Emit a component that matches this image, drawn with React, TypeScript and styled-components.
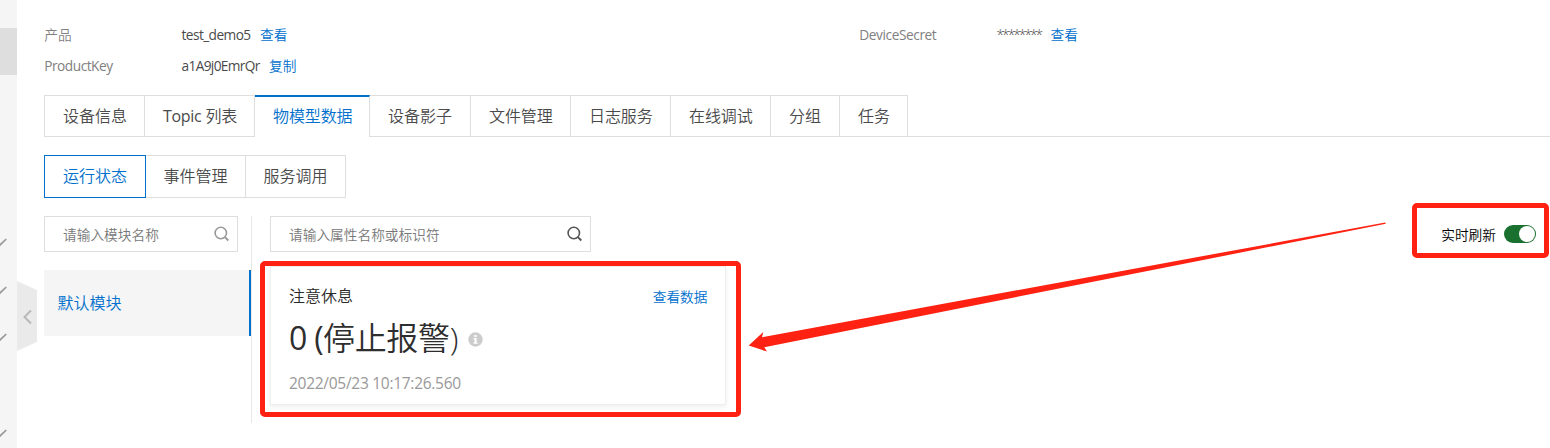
import React from 'react';
import styled, { createGlobalStyle } from 'styled-components';

const BLUE = '#0070cc';
const RED = '#ff2111';
const LINE = '#dedede';

const Global = createGlobalStyle`
  * { box-sizing: border-box; }
  body {
    margin: 0;
    background: #fff;
    overflow: hidden;
    font-family: "Open Sans", "Noto Sans CJK SC", sans-serif;
    font-size: 13.7px;
    font-weight: 360;
    color: #4a4a4a;
  }
`;

const Page = styled.div`
  position: relative;
  display: flex;
  width: 1550px;
  height: 448px;
  overflow: hidden;
`;

const Sidebar = styled.aside`
  flex: none;
  width: 17px;
  height: 448px;
  padding-top: 28px;
  background: #f5f5f5;
`;

const SidebarCurrent = styled.div`
  height: 47px;
  background: #dedede;
`;

const SidebarArrows = styled.svg`
  position: absolute;
  left: 0;
  top: 230px;
`;

const Collapse = styled.svg`
  position: absolute;
  left: 17px;
  top: 281px;
`;

const Main = styled.main`
  flex: none;
  width: 1506px;
  margin-left: 27px;
  padding-top: 20px;
`;

const InfoGrid = styled.dl`
  display: grid;
  grid-template-columns: 815px 1fr;
  grid-auto-rows: 31px;
  margin: 0;
  height: 75px;
`;

const InfoItem = styled.div`
  display: flex;
  height: 30px;
  line-height: 30px;
  white-space: nowrap;
`;

const Latin = styled.span<{ $track?: number }>`
  font-weight: 400;
  letter-spacing: ${(p) => p.$track ?? 0}px;
`;

const InfoLabel = styled.dt`
  width: 137.5px;
  padding-left: 0.3px;
  color: #808080;
`;

const InfoValue = styled.dd<{ $width: number; $track?: number }>`
  margin: 0;
  width: ${(p) => p.$width}px;
  letter-spacing: ${(p) => p.$track ?? 0}px;
`;

const Link = styled.a`
  color: ${BLUE};
  white-space: nowrap;
`;

const Tabs = styled.nav`
  display: flex;
  height: 42px;
  border-left: 1px solid ${LINE};
  font-size: 16px;
`;

const Tab = styled.div<{ $width: number; $active?: boolean; $track?: number }>`
  flex: none;
  width: ${(p) => p.$width}px;
  height: 42px;
  padding-left: 18px;
  line-height: ${(p) => (p.$active ? 39 : 40)}px;
  white-space: nowrap;
  letter-spacing: ${(p) => p.$track ?? 0}px;
  color: ${(p) => (p.$active ? BLUE : '#4a4a4a')};
  border-top: ${(p) => (p.$active ? `2px solid ${BLUE}` : `1px solid ${LINE}`)};
  border-right: 1px solid ${LINE};
  border-bottom: ${(p) => (p.$active ? 'none' : `1px solid ${LINE}`)};
`;

const TabsRest = styled.div`
  flex: 1;
  border-bottom: 1px solid ${LINE};
`;

const SubTabs = styled.nav`
  display: flex;
  margin-top: 18px;
  height: 43px;
  font-size: 16px;
`;

const SubTab = styled.div<{ $width: number; $active?: boolean }>`
  flex: none;
  width: ${(p) => p.$width}px;
  padding-left: ${(p) => (p.$active ? 18 : 17.5)}px;
  line-height: 41px;
  color: ${(p) => (p.$active ? BLUE : '#4a4a4a')};
  border: 1px solid ${(p) => (p.$active ? BLUE : LINE)};
  border-left-width: ${(p) => (p.$active ? 1 : 0)}px;
`;

const Content = styled.div`
  display: flex;
  margin-top: 18px;
  height: 207px;
`;

const Modules = styled.section`
  width: 208px;
  border-right: 1px solid #e8e8e8;
`;

const SearchBox = styled.div<{ $width: number }>`
  display: flex;
  align-items: center;
  justify-content: space-between;
  width: ${(p) => p.$width}px;
  height: 36px;
  padding: 0 7px 0 18px;
  border: 1px solid ${LINE};
  color: #777;
`;

const ModuleItem = styled.div`
  width: 207px;
  height: 66px;
  margin-top: 18px;
  padding-left: 13.5px;
  line-height: 66px;
  font-size: 16px;
  color: ${BLUE};
  background: #f5f5f5;
  border-right: 2px solid ${BLUE};
`;

const Properties = styled.section`
  flex: 1;
  padding-left: 18px;
`;

const Card = styled.article`
  width: 456px;
  height: 139px;
  margin-top: 14px;
  padding: 17px 17.5px 0 18px;
  border: 1px solid #eee;
  box-shadow: 0 2px 5px rgba(0, 0, 0, 0.07);
`;

const CardHead = styled.header`
  display: flex;
  justify-content: space-between;
  height: 25px;
  line-height: 24px;
`;

const CardName = styled.span`
  font-size: 16px;
  color: #2a2a2a;
`;

const CardAction = styled(Link)`
  line-height: 26px;
`;

const CardValue = styled.div`
  display: flex;
  align-items: center;
  gap: 10px;
  height: 58px;
  line-height: 58px;
  font-size: 32px;
  letter-spacing: -0.3px;
  color: #2e2e2e;
  white-space: nowrap;

  svg {
    margin-top: 3px;
  }
`;

const CardTime = styled.time`
  display: block;
  height: 24px;
  margin-top: 4px;
  line-height: 24px;
  font-size: 15.5px;
  font-weight: 400;
  letter-spacing: -0.28px;
  color: #999;
`;

const Refresh = styled.label`
  display: flex;
  align-items: center;
  gap: 8px;
  height: 36px;
  margin-right: 14px;
  color: #000;
`;

const Switch = styled.span`
  display: flex;
  justify-content: flex-end;
  width: 32px;
  height: 18px;
  padding: 1px;
  border-radius: 9px;
  background: #19702f;
`;

const Knob = styled.span`
  width: 16px;
  height: 16px;
  border-radius: 50%;
  background: #fff;
`;

const Highlight = styled.div<{ $x: number; $y: number; $w: number; $h: number }>`
  position: absolute;
  left: ${(p) => p.$x}px;
  top: ${(p) => p.$y}px;
  width: ${(p) => p.$w}px;
  height: ${(p) => p.$h}px;
  border: 5px solid ${RED};
  border-radius: 5px;
`;

const Arrow = styled.svg`
  position: absolute;
  left: 740px;
  top: 215px;
`;

const SearchIcon = ({ color }: { color: string }) => (
  <svg width="16" height="16" viewBox="0 0 16 16" fill="none" stroke={color} strokeWidth="1.6">
    <circle cx="6.8" cy="7" r="5.7" />
    <path d="M10.7 10.9L14.3 14.5" strokeWidth="1.9" />
  </svg>
);

const InfoIcon = () => (
  <svg width="15" height="15" viewBox="0 0 15 15">
    <circle cx="7.5" cy="7.5" r="7.2" fill="#ccc" />
    <path d="M6.4 3h2.2v2H6.4zM5.6 6.1h3v4.5h1v1.2H5.5v-1.2h1V7.3h-.9z" fill="#fff" />
  </svg>
);

const tabs = [
  { label: '设备信息', width: 100 },
  { latin: 'Topic', label: ' 列表', width: 110, track: -0.15 },
  { label: '物模型数据', width: 115, active: true, track: -0.1 },
  { label: '设备影子', width: 101 },
  { label: '文件管理', width: 100, track: -0.1 },
  { label: '日志服务', width: 100, track: -0.1 },
  { label: '在线调试', width: 100, track: -0.1 },
  { label: '分组', width: 69 },
  { label: '任务', width: 68 },
];

export default function App() {
  return (
    <Page>
      <Global />
      <Sidebar>
        <SidebarCurrent />
      </Sidebar>
      <SidebarArrows width="8" height="218" fill="none" stroke="#999" strokeWidth="1.7">
        {[9, 57, 104, 200].map((y) => (
          <path key={y} d={`M-5 ${y + 1}L0 ${y + 6}L6.3 ${y}`} />
        ))}
      </SidebarArrows>
      <Collapse width="20" height="70">
        <path d="M0 0L20 9V61L0 70Z" fill="#eaeaea" />
        <path d="M14 29.5L7.5 36L14 42.5" fill="none" stroke="#b8b8b8" strokeWidth="2" />
      </Collapse>

      <Main>
        <InfoGrid>
          <InfoItem>
            <InfoLabel>产品</InfoLabel>
            <InfoValue $width={78.5}>
              <Latin $track={-0.57}>test_demo5</Latin>
            </InfoValue>
            <Link>查看</Link>
          </InfoItem>
          <InfoItem>
            <InfoLabel>
              <Latin $track={-0.42}>DeviceSecret</Latin>
            </InfoLabel>
            <InfoValue $width={54} $track={-1.95}>********</InfoValue>
            <Link>查看</Link>
          </InfoItem>
          <InfoItem>
            <InfoLabel>
              <Latin $track={-0.5}>ProductKey</Latin>
            </InfoLabel>
            <InfoValue $width={87.5}>
              <Latin $track={-0.64}>a1A9j0EmrQr</Latin>
            </InfoValue>
            <Link>复制</Link>
          </InfoItem>
        </InfoGrid>

        <Tabs>
          {tabs.map((t) => (
            <Tab key={t.label} $width={t.width} $active={t.active} $track={t.track}>
              {t.latin && <Latin $track={-0.3}>{t.latin}</Latin>}
              {t.label}
            </Tab>
          ))}
          <TabsRest />
        </Tabs>

        <SubTabs>
          <SubTab $width={102} $active>运行状态</SubTab>
          <SubTab $width={100}>事件管理</SubTab>
          <SubTab $width={100}>服务调用</SubTab>
        </SubTabs>

        <Content>
          <Modules>
            <SearchBox $width={194}>
              请输入模块名称
              <SearchIcon color="#999" />
            </SearchBox>
            <ModuleItem>默认模块</ModuleItem>
          </Modules>
          <Properties>
            <SearchBox $width={321}>
              请输入属性名称或标识符
              <SearchIcon color="#555" />
            </SearchBox>
            <Card>
              <CardHead>
                <CardName>注意休息</CardName>
                <CardAction>查看数据</CardAction>
              </CardHead>
              <CardValue>
                <span>
                  <Latin $track={-0.7}>0 (</Latin>停止报警)
                </span>
                <InfoIcon />
              </CardValue>
              <CardTime>2022/05/23 10:17:26.560</CardTime>
            </Card>
          </Properties>
          <Refresh>
            实时刷新
            <Switch>
              <Knob />
            </Switch>
          </Refresh>
        </Content>
      </Main>

      <Highlight $x={260} $y={261} $w={481} $h={156} />
      <Highlight $x={1412} $y={203} $w={137} $h={55} />
      <Arrow width="650" height="140">
        <path
          d="M8.7 130.6L23.3 117L22 122.3L240 82L645.2 7.6L645.8 8.8L240 89.2L24.3 132.3L27 136.6Z"
          fill={RED}
        />
      </Arrow>
    </Page>
  );
}
